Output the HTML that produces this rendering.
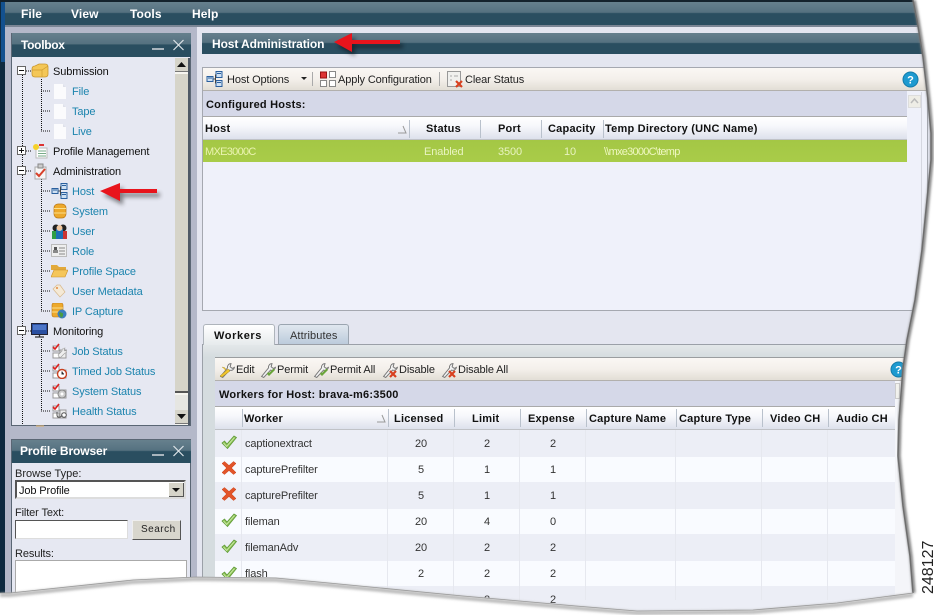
<!DOCTYPE html>
<html><head><meta charset="utf-8"><style>
html,body{margin:0;padding:0;background:#fff}
#p{position:relative;width:938px;height:616px;overflow:hidden;background:#b4b8c9;font-family:"Liberation Sans",sans-serif;font-size:11px;color:#222;filter:blur(.25px)}
#p div,#p span,#p svg{position:absolute}
.t{white-space:nowrap;line-height:14px;letter-spacing:-.12px;margin-top:1px}
.b{font-weight:bold;color:#111;letter-spacing:.22px}
.w{color:#fff;font-weight:bold;font-size:12px;letter-spacing:-.1px}
.m{letter-spacing:.1px}
.l{color:#1c84ae;left:72px}
.k{color:#111;left:53px}
.c{text-align:center;color:#333}
.bar{background:linear-gradient(#66808d 0,#557180 45%,#2a4e60 50%,#2a4e60 100%)}
.tb{background:linear-gradient(#faf7f4 0,#f3efea 50%,#e2ded6 95%,#8d8d8d 100%)}
.hd{background:linear-gradient(#fff 0,#f6f7fb 40%,#dde1ec 95%,#aaa 100%)}
.sep{width:1px;background:#b9c1cc}
.cl{width:1px;background:#e6e8ef;top:430px;height:170px}
</style></head><body><div id="p">
<svg width="0" height="0"><defs>
<symbol id="page" viewBox="0 0 16 16"><path d="M2 1h9l3 3v12H2z" fill="#fbfbfd"/><path d="M11 1l3 3h-3z" fill="#dfe1ea"/></symbol>
<symbol id="net" viewBox="0 0 16 16"><rect x="0.5" y="5.5" width="6" height="5" fill="#cfe0f2" stroke="#2a5f9e"/><rect x="9.5" y="0.5" width="6" height="6" fill="#cfe0f2" stroke="#2a5f9e"/><rect x="9.5" y="9.5" width="6" height="6" fill="#cfe0f2" stroke="#2a5f9e"/><path d="M1.500 7h4M10.500 2.500h4M10.500 11.500h4" stroke="#2a5f9e"/><path d="M7 8h2M9 3.500v9" stroke="#444" fill="none"/></symbol>
<symbol id="check" viewBox="0 0 16 14"><path d="M1 8l2.500-2 2.500 3L13 1l2.500 1.500L6.500 13.500z" fill="#8cc152" stroke="#5f9a3a" stroke-width=".8"/><path d="M2.500 8l3 3.500L13.500 2.500" stroke="#c6e6a2" fill="none"/></symbol>
<symbol id="x" viewBox="0 0 16 14"><path d="M1 2.500L3.500 .5 8 4.500 12.500 .5 15 2.500 10.500 7 15 11.500 12.500 13.500 8 9.500 3.500 13.500 1 11.500 5.500 7z" fill="#e2552a" stroke="#c9431b" stroke-width=".5"/></symbol>
<symbol id="wr" viewBox="0 0 16 16"><path d="M1.500 14.500l2 1L10 8.500c2 .8 4-.2 4.500-2.500l-2 1-2-1.500.8-3C9 2.500 7.700 4.500 8 6.500z" fill="#f2f2f2" stroke="#777" stroke-width=".9"/></symbol>
<symbol id="tick" viewBox="0 0 16 16"><rect x="2" y="3" width="6" height="5" fill="#fff" stroke="#999"/><rect x="2" y="10" width="6" height="5" fill="#fff" stroke="#999"/><rect x="9" y="7" width="6" height="8" fill="#eee" stroke="#999"/><path d="M2 4l2 2 4-5" stroke="#d22" stroke-width="1.600" fill="none"/></symbol>
<symbol id="db" viewBox="0 0 16 16"><rect x="2" y="1" width="12" height="14" rx="4" fill="#eda92c" stroke="#b87514" stroke-width=".7"/><path d="M2 5.500h12M2 10h12" stroke="#fbe08c"/></symbol>
</defs></svg>

<!-- frame -->
<div style="left:0;top:0;width:5px;height:616px;background:#0e2a40"></div>
<div style="left:1px;top:0;width:4px;height:62px;background:#13518f"></div>
<div class="bar" style="left:5px;top:2px;width:930px;height:23px"></div>
<div style="left:0;top:0;width:938px;height:2px;background:#14222c"></div>
<div style="left:5px;top:25px;width:930px;height:2px;background:#7b8695"></div>
<div style="left:197px;top:27px;width:741px;height:590px;background:#e4e6f0"></div>
<span class="t w m" style="left:21px;top:6px">File</span>
<span class="t w m" style="left:71px;top:6px">View</span>
<span class="t w m" style="left:130px;top:6px">Tools</span>
<span class="t w m" style="left:192px;top:6px">Help</span>

<!-- Toolbox -->
<div style="left:11px;top:33px;width:180px;height:393px;background:#e6e8f2;box-shadow:inset 0 0 0 1px #5a6674"></div>
<div class="bar" style="left:12px;top:33px;width:179px;height:24px"></div>
<span class="t w" style="left:21px;top:37px;letter-spacing:-.3px">Toolbox</span>
<div style="left:152px;top:48px;width:12px;height:2px;background:#a9b5bd"></div>
<svg style="left:172px;top:39px" width="13" height="12"><path d="M1.500 1L11.500 11M11.500 1L1.500 11" stroke="#dfe5e9" stroke-width="1.200"/></svg>
<!-- scrollbar -->
<div style="left:175px;top:58px;width:14px;height:367px;background:#f6f5f0"></div>
<div style="left:175px;top:74px;width:13px;height:319px;background:#d6d4c9;border-bottom:2px solid #555;box-sizing:border-box"></div>
<div style="left:175px;top:395px;width:14px;height:16px;background:#e6e6e2"></div>
<div style="left:188px;top:58px;width:2px;height:367px;background:#4f5965"></div>
<div style="left:175px;top:58px;width:13px;height:14px;background:#d6d4c9;border-bottom:1px solid #777;box-sizing:border-box"></div>
<svg style="left:177px;top:62px" width="10" height="6"><path d="M0 5h9L4.500 0z" fill="#111"/></svg>
<div style="left:175px;top:410px;width:13px;height:14px;background:#d6d4c9;border-bottom:1px solid #777;box-sizing:border-box"></div>
<svg style="left:177px;top:414px" width="10" height="6"><path d="M0 0h9L4.500 5z" fill="#111"/></svg>

<!-- tree lines -->
<svg style="left:12px;top:57px" width="62" height="368"><g stroke="#111" stroke-dasharray="1 1" fill="none">
<path d="M10.500 18V368"/>
<path d="M29.500 22V74M29.500 122V254M29.500 282V354"/>
<path d="M29 34h10M29 54h10M29 74h10M29 134h10M29 154h10M29 174h10M29 194h10M29 214h10M29 234h10M29 254h10M29 294h10M29 314h10M29 334h10M29 354h10"/>
<path d="M14 14h6M14 94h6M14 114h6M14 274h6"/>
</g></svg>
<svg style="left:17px;top:66px" width="10" height="270"><g fill="#fff" stroke="#666"><rect x=".5" y=".5" width="8" height="8"/><rect x=".5" y="80.500" width="8" height="8"/><rect x=".5" y="100.500" width="8" height="8"/><rect x=".5" y="260.500" width="8" height="8"/></g><path d="M2 4.500h5M2 84.500h5M4.500 82v5M2 104.500h5M2 264.500h5" stroke="#111"/></svg>

<!-- tree icons -->
<svg style="left:31px;top:63px" width="18" height="16"><path d="M1 6Q1 3 4 3L8 1h6q3 0 3 3v7q0 3-3 3H4q-3 0-3-3z" fill="#f4c757" stroke="#c9962c" stroke-width=".8"/><path d="M1 7h10l6-4M11 7v7" stroke="#cf9c30" fill="none" stroke-width=".7"/></svg>
<svg style="left:52px;top:83px" width="16" height="16"><use href="#page"/></svg>
<svg style="left:52px;top:103px" width="16" height="16"><use href="#page"/></svg>
<svg style="left:52px;top:123px" width="16" height="16"><use href="#page"/></svg>
<svg style="left:32px;top:143px" width="16" height="16"><rect x="4" y="5" width="11" height="10" fill="#fff" stroke="#bbb"/><path d="M6 8h8M6 10.500h8M6 13h8" stroke="#7a8" /><circle cx="4" cy="4" r="3" fill="#f5d12a"/><rect x="7" y="1" width="5" height="2" fill="#d33"/></svg>
<svg style="left:33px;top:163px" width="15" height="17"><path d="M2 4h11v12H2z" fill="#f6f6f6" stroke="#aaa"/><rect x="5" y="1" width="5" height="4" fill="#ccc" stroke="#888"/><path d="M3 10l3 3 6-7" stroke="#d8402a" stroke-width="2" fill="none"/></svg>
<svg style="left:51px;top:183px" width="17" height="16"><use href="#net"/></svg>
<svg style="left:52px;top:203px" width="16" height="16"><use href="#db"/></svg>
<svg style="left:51px;top:223px" width="17" height="16"><circle cx="5" cy="5" r="3.500" fill="#222"/><circle cx="12" cy="5" r="3.500" fill="#222"/><rect x="1" y="8" width="5" height="8" fill="#2f9e44"/><rect x="11" y="8" width="5" height="8" fill="#c33"/><rect x="5" y="6" width="7" height="10" fill="#1d6fb5"/><circle cx="8.500" cy="5" r="3" fill="#f1c9a2"/></svg>
<svg style="left:51px;top:244px" width="16" height="13"><rect x=".5" y=".5" width="15" height="12" fill="#eee" stroke="#bbb"/><rect x="3" y="3" width="3" height="3" fill="#555"/><rect x="2" y="6" width="5" height="3" fill="#888"/><path d="M8 4h6M8 7h6M8 10h6" stroke="#888"/></svg>
<svg style="left:51px;top:264px" width="17" height="14"><path d="M0 1h6l2 2h7v3H0z" fill="#e2a93a"/><path d="M0 13L3 6h14l-3 7z" fill="#f5c65a" stroke="#c9902a" stroke-width=".6"/></svg>
<svg style="left:52px;top:284px" width="14" height="14"><path d="M1 5L5 1h3l5 7-5 5z" fill="#f4e9d6" stroke="#d8b98c" stroke-width=".7"/><circle cx="5" cy="4" r="1" fill="#e58a3c"/></svg>
<svg style="left:51px;top:303px" width="16" height="16"><rect x="1" y="0" width="11" height="14" rx="2" fill="#eda92c" stroke="#b87514" stroke-width=".6"/><path d="M1 5h11M1 9h11" stroke="#fbe08c"/><circle cx="11" cy="11" r="4.500" fill="#3d7fbd"/><path d="M8 10c2-2 3 1 4 0v3l-2 2z" fill="#4a9c3f"/></svg>
<svg style="left:31px;top:323px" width="18" height="17"><rect x=".5" y=".5" width="16" height="11" fill="#2a4fa0" stroke="#223"/><rect x="2" y="2" width="13" height="5" fill="#4d76c8"/><path d="M4 14h9M8.500 12v2" stroke="#333" stroke-width="1.300"/></svg>
<svg style="left:51px;top:343px" width="16" height="16"><use href="#tick"/><path d="M9 15l5-5c1 0 2-1 2-3l-2 1-1-1 1-2c-2 0-3 1-3 3l-4 4z" fill="#eee" stroke="#999" stroke-width=".6"/></svg>
<svg style="left:51px;top:363px" width="16" height="16"><use href="#tick"/><circle cx="11" cy="11" r="4.500" fill="#fff" stroke="#c8401f" stroke-width="1.400"/><path d="M11 8.500V11h2" stroke="#333"/></svg>
<svg style="left:51px;top:383px" width="16" height="16"><use href="#tick"/><circle cx="11" cy="11" r="4" fill="#ccc" stroke="#888"/><circle cx="11" cy="11" r="1.500" fill="#fff"/></svg>
<svg style="left:51px;top:403px" width="16" height="16"><use href="#tick"/><circle cx="13" cy="12" r="2.300" fill="#fff" stroke="#555"/><path d="M6 9v3c0 3 4 3 5 0" stroke="#555" fill="none"/></svg>
<div style="left:36px;top:425px;width:8px;height:2px;background:#d7b27a;opacity:.6"></div>

<!-- tree text -->
<span class="t k" style="top:64px">Submission</span>
<span class="t l" style="top:84px">File</span>
<span class="t l" style="top:104px">Tape</span>
<span class="t l" style="top:124px">Live</span>
<span class="t k" style="top:144px">Profile Management</span>
<span class="t k" style="top:164px">Administration</span>
<span class="t l" style="top:184px">Host</span>
<span class="t l" style="top:204px">System</span>
<span class="t l" style="top:224px">User</span>
<span class="t l" style="top:244px">Role</span>
<span class="t l" style="top:264px">Profile Space</span>
<span class="t l" style="top:284px">User Metadata</span>
<span class="t l" style="top:304px">IP Capture</span>
<span class="t k" style="top:324px">Monitoring</span>
<span class="t l" style="top:344px">Job Status</span>
<span class="t l" style="top:364px">Timed Job Status</span>
<span class="t l" style="top:384px">System Status</span>
<span class="t l" style="top:404px">Health Status</span>

<!-- Profile browser -->
<div style="left:11px;top:439px;width:180px;height:170px;background:#e6e8f2;box-shadow:inset 0 0 0 1px #5a6674"></div>
<div class="bar" style="left:12px;top:440px;width:179px;height:23px"></div>
<span class="t w" style="left:20px;top:443px">Profile Browser</span>
<div style="left:152px;top:454px;width:12px;height:2px;background:#a9b5bd"></div>
<svg style="left:172px;top:445px" width="13" height="12"><path d="M1.500 1L11.500 11M11.500 1L1.500 11" stroke="#dfe5e9" stroke-width="1.200"/></svg>
<span class="t" style="left:15px;top:466px;color:#222;letter-spacing:0">Browse Type:</span>
<div style="left:15px;top:480px;width:171px;height:19px;background:#fff;box-sizing:border-box;border:2px solid;border-color:#555 #ddd #ddd #555"></div>
<span class="t" style="left:19px;top:483px;color:#111">Job Profile</span>
<div style="left:169px;top:483px;width:15px;height:14px;background:#d6d4c9;box-sizing:border-box;border-right:1px solid #555;border-bottom:1px solid #555"></div>
<svg style="left:172px;top:488px" width="9" height="5"><path d="M0 0h8L4 4z" fill="#111"/></svg>
<span class="t" style="left:15px;top:505px;color:#222">Filter Text:</span>
<div style="left:15px;top:520px;width:113px;height:19px;background:#fff;box-sizing:border-box;border:1px solid;border-color:#555 #ddd #ddd #555"></div>
<div style="left:132px;top:520px;width:49px;height:20px;background:#d8d6cd;box-sizing:border-box;border:1px solid;border-color:#eee #555 #555 #eee"></div>
<span class="t" style="left:141px;top:522px;color:#222;font-size:10px;letter-spacing:.5px">Search</span>
<span class="t" style="left:15px;top:546px;color:#222">Results:</span>
<div style="left:15px;top:560px;width:172px;height:40px;background:#fff;box-sizing:border-box;border:1px solid #aaa"></div>

<!-- Host Admin header -->
<div class="bar" style="left:202px;top:33px;width:736px;height:21px"></div>
<span class="t w" style="left:212px;top:36px">Host Administration</span>

<!-- top panel -->
<div style="left:202px;top:67px;width:726px;height:244px;background:#eff1fa;box-sizing:border-box;border:1px solid #a5a8b0"></div>
<div class="tb" style="left:203px;top:68px;width:723px;height:23px"></div>
<svg style="left:206px;top:71px" width="17" height="16"><use href="#net"/></svg>
<span class="t" style="left:227px;top:72px;color:#222">Host Options</span>
<svg style="left:301px;top:77px" width="7" height="4"><path d="M0 0h6L3 3z" fill="#222"/></svg>
<div class="sep" style="left:312px;top:72px;height:14px;background:#aaa"></div>
<svg style="left:320px;top:71px" width="16" height="16"><rect x=".5" y="1" width="6" height="6" fill="#d33" stroke="#911"/><rect x="9.500" y=".5" width="6" height="6" fill="#fff" stroke="#888"/><rect x=".5" y="9.500" width="6" height="6" fill="#fff" stroke="#888"/><rect x="9.500" y="9.500" width="6" height="6" fill="#fff" stroke="#888"/></svg>
<span class="t" style="left:338px;top:72px;color:#222">Apply Configuration</span>
<div class="sep" style="left:439px;top:72px;height:14px;background:#aaa"></div>
<svg style="left:447px;top:71px" width="17" height="17"><rect x=".5" y=".5" width="13" height="15" fill="#f0f0ee" stroke="#999"/><path d="M3 5h2M3 9h2M7 5h4" stroke="#aaa"/><path d="M9 10l6 6M15 10l-6 6" stroke="#d8401f" stroke-width="2.200"/></svg>
<span class="t" style="left:465px;top:72px;color:#222">Clear Status</span>
<svg style="left:902px;top:71px" width="17" height="17"><circle cx="8.500" cy="8.500" r="7.500" fill="#1d9ad0" stroke="#137aa8"/><text x="8.500" y="12.500" font-size="11" font-weight="bold" fill="#fff" text-anchor="middle" font-family="Liberation Sans">?</text></svg>
<div style="left:203px;top:91px;width:704px;height:26px;background:#d5d8e8;border-bottom:1px solid #aaa;box-sizing:border-box"></div>
<span class="t b" style="left:206px;top:97px">Configured Hosts:</span>
<div class="hd" style="left:203px;top:117px;width:704px;height:23px"></div>
<div class="sep" style="left:409px;top:120px;height:18px"></div>
<div class="sep" style="left:480px;top:120px;height:18px"></div>
<div class="sep" style="left:541px;top:120px;height:18px"></div>
<div class="sep" style="left:603px;top:120px;height:18px"></div>
<span class="t b" style="left:205px;top:121px">Host</span>
<svg style="left:397px;top:125px" width="10" height="9"><path d="M1 8h8L6 1" stroke="#999" fill="none"/></svg>
<span class="t b" style="left:426px;top:121px">Status</span>
<span class="t b" style="left:498px;top:121px">Port</span>
<span class="t b" style="left:548px;top:121px">Capacity</span>
<span class="t b" style="left:605px;top:121px">Temp Directory (UNC Name)</span>
<div style="left:203px;top:140px;width:704px;height:22px;background:linear-gradient(#a4c745,#a9cc49)"></div>
<span class="t" style="left:205px;top:144px;color:#eaf3b0;letter-spacing:-.7px">MXE3000C</span>
<span class="t" style="left:424px;top:144px;color:#e8f3c0">Enabled</span>
<span class="t" style="left:498px;top:144px;color:#e8f3c0">3500</span>
<span class="t" style="left:564px;top:144px;color:#e8f3c0">10</span>
<span class="t" style="left:604px;top:144px;color:#eef7c0;letter-spacing:-.75px">\\mxe3000C\temp</span>
<div style="left:908px;top:95px;width:13px;height:13px;background:#eeede6;box-sizing:border-box;border:1px solid #ddd"></div>
<svg style="left:910px;top:98px" width="9" height="6"><path d="M1 5L4.500 1 8 5" stroke="#bbb" stroke-width="1.500" fill="none"/></svg>
<div style="left:921px;top:92px;width:1px;height:218px;background:#d5d7e0"></div>

<!-- tabs -->
<div style="left:202px;top:344px;width:736px;height:1px;background:#9ba0a8"></div>
<!-- worker panel -->
<div style="left:202px;top:345px;width:736px;height:271px;background:linear-gradient(#e3e7e9,#d5dcdf 12px)"></div>
<div style="left:202px;top:345px;width:1px;height:240px;background:#9ba0a8"></div>
<div style="left:198px;top:345px;width:4px;height:240px;background:#e4e6f0"></div>
<div style="left:203px;top:324px;width:72px;height:21px;background:linear-gradient(#fff,#e6eaec);box-sizing:border-box;border:1px solid #aeb4bb;border-bottom:0;border-radius:3px 3px 0 0"></div>
<div style="left:278px;top:324px;width:71px;height:20px;background:linear-gradient(#e0e7ef,#bccbdb);box-sizing:border-box;border:1px solid #9ba5b0;border-bottom:0;border-radius:3px 3px 0 0"></div>
<span class="t b" style="left:214px;top:328px;letter-spacing:.6px">Workers</span>
<span class="t" style="left:290px;top:328px;color:#333;letter-spacing:.1px">Attributes</span>
<div style="left:215px;top:357px;width:723px;height:1px;background:#9a9d9f"></div>
<div class="tb" style="left:215px;top:358px;width:723px;height:23px"></div>
<div style="left:215px;top:381px;width:680px;height:26px;background:#d5d8e8;border-bottom:1px solid #aaa;box-sizing:border-box"></div>
<div style="left:215px;top:407px;width:680px;height:23px" class="hd"></div>
<div style="left:895px;top:381px;width:43px;height:235px;background:#f4f5f9"></div>

<!-- worker toolbar -->
<svg style="left:219px;top:361px" width="17" height="17"><use href="#wr"/><path d="M1 15l8-7 2 2-8 6zM3 6l3 1 1 3" fill="#f1c62c" stroke="#a8871a" stroke-width=".5"/></svg>
<span class="t" style="left:236px;top:362px">Edit</span>
<svg style="left:260px;top:361px" width="17" height="17"><use href="#wr"/><path d="M7 13l2 2 6-6-1.500-1.500L9 12l-1-1z" fill="#6aa53a"/></svg>
<span class="t" style="left:277px;top:362px">Permit</span>
<svg style="left:313px;top:361px" width="17" height="17"><use href="#wr"/><path d="M7 13l2 2 6-6-1.500-1.500L9 12l-1-1z" fill="#6aa53a"/></svg>
<span class="t" style="left:330px;top:362px">Permit All</span>
<svg style="left:382px;top:361px" width="17" height="17"><use href="#wr"/><path d="M8 10l6 6M14 10l-6 6" stroke="#d8401f" stroke-width="2.200"/></svg>
<span class="t" style="left:399px;top:362px">Disable</span>
<svg style="left:441px;top:361px" width="17" height="17"><use href="#wr"/><path d="M8 10l6 6M14 10l-6 6" stroke="#d8401f" stroke-width="2.200"/></svg>
<span class="t" style="left:458px;top:362px">Disable All</span>
<svg style="left:890px;top:361px" width="17" height="17"><circle cx="8.500" cy="8.500" r="7.500" fill="#1d9ad0" stroke="#137aa8"/><text x="8.500" y="12.500" font-size="11" font-weight="bold" fill="#fff" text-anchor="middle" font-family="Liberation Sans">?</text></svg>
<span class="t b" style="left:219px;top:387px">Workers for Host: brava-m6:3500</span>
<div style="left:895px;top:383px;width:5px;height:16px;background:#f2f2ee;box-sizing:border-box;border:1px solid #ccc"></div>

<!-- worker header -->
<div class="sep" style="left:242px;top:409px;height:18px"></div>
<div class="sep" style="left:388px;top:409px;height:18px"></div>
<div class="sep" style="left:454px;top:409px;height:18px"></div>
<div class="sep" style="left:520px;top:409px;height:18px"></div>
<div class="sep" style="left:586px;top:409px;height:18px"></div>
<div class="sep" style="left:676px;top:409px;height:18px"></div>
<div class="sep" style="left:762px;top:409px;height:18px"></div>
<div class="sep" style="left:828px;top:409px;height:18px"></div>
<span class="t b" style="left:244px;top:411px">Worker</span>
<svg style="left:376px;top:414px" width="10" height="9"><path d="M1 8h8L6 1" stroke="#999" fill="none"/></svg>
<span class="t b" style="left:394px;top:411px">Licensed</span>
<span class="t b" style="left:472px;top:411px">Limit</span>
<span class="t b" style="left:528px;top:411px">Expense</span>
<span class="t b" style="left:589px;top:411px">Capture Name</span>
<span class="t b" style="left:679px;top:411px">Capture Type</span>
<span class="t b" style="left:770px;top:411px">Video CH</span>
<span class="t b" style="left:836px;top:411px">Audio CH</span>

<!-- rows -->
<div style="left:215px;top:430px;width:680px;height:27px;background:#eceef6"></div>
<div style="left:215px;top:457px;width:680px;height:25px;background:#f9fbff"></div>
<div style="left:215px;top:482px;width:680px;height:27px;background:#eceef6"></div>
<div style="left:215px;top:509px;width:680px;height:25px;background:#f9fbff"></div>
<div style="left:215px;top:534px;width:680px;height:27px;background:#eceef6"></div>
<div style="left:215px;top:561px;width:680px;height:25px;background:#f9fbff"></div>
<div style="left:215px;top:586px;width:680px;height:30px;background:#eceef6"></div>
<div class="cl" style="left:241px"></div><div class="cl" style="left:387px"></div><div class="cl" style="left:453px"></div><div class="cl" style="left:519px"></div><div class="cl" style="left:585px"></div><div class="cl" style="left:675px"></div><div class="cl" style="left:761px"></div><div class="cl" style="left:827px"></div>

<svg style="left:221px;top:435px" width="16" height="14"><use href="#check"/></svg>
<svg style="left:221px;top:461px" width="16" height="14"><use href="#x"/></svg>
<svg style="left:221px;top:487px" width="16" height="14"><use href="#x"/></svg>
<svg style="left:221px;top:513px" width="16" height="14"><use href="#check"/></svg>
<svg style="left:221px;top:539px" width="16" height="14"><use href="#check"/></svg>
<svg style="left:221px;top:566px" width="16" height="14"><use href="#check"/></svg>

<span class="t" style="left:245px;top:436px;color:#333">captionextract</span>
<span class="t" style="left:245px;top:462px;color:#333">capturePrefilter</span>
<span class="t" style="left:245px;top:488px;color:#333">capturePrefilter</span>
<span class="t" style="left:245px;top:514px;color:#333">fileman</span>
<span class="t" style="left:245px;top:540px;color:#333">filemanAdv</span>
<span class="t" style="left:245px;top:566px;color:#333">flash</span>

<span class="t c" style="left:388px;width:66px;top:436px">20</span><span class="t c" style="left:454px;width:66px;top:436px">2</span><span class="t c" style="left:520px;width:66px;top:436px">2</span>
<span class="t c" style="left:388px;width:66px;top:462px">5</span><span class="t c" style="left:454px;width:66px;top:462px">1</span><span class="t c" style="left:520px;width:66px;top:462px">1</span>
<span class="t c" style="left:388px;width:66px;top:488px">5</span><span class="t c" style="left:454px;width:66px;top:488px">1</span><span class="t c" style="left:520px;width:66px;top:488px">1</span>
<span class="t c" style="left:388px;width:66px;top:514px">20</span><span class="t c" style="left:454px;width:66px;top:514px">4</span><span class="t c" style="left:520px;width:66px;top:514px">0</span>
<span class="t c" style="left:388px;width:66px;top:540px">20</span><span class="t c" style="left:454px;width:66px;top:540px">2</span><span class="t c" style="left:520px;width:66px;top:540px">2</span>
<span class="t c" style="left:388px;width:66px;top:566px">2</span><span class="t c" style="left:454px;width:66px;top:566px">2</span><span class="t c" style="left:520px;width:66px;top:566px">2</span>
<span class="t c" style="left:454px;width:66px;top:592px">2</span><span class="t c" style="left:520px;width:66px;top:592px">2</span>

<!-- torn edge -->
<svg style="left:0;top:0" width="938" height="616" viewBox="0 0 938 616">
<defs><filter id="bl" x="-5%" y="-5%" width="110%" height="110%"><feGaussianBlur stdDeviation="1.200"/></filter></defs>
<path d="M938 0H913L917 20 923 57 928 100 931 133 931 160 928 190 922 250 915 300 907 340 903 368 899 420 898 456 903 506 910 556 913 593 837 603 753 610 637 611 576 606 463 596 329 583 276 578 196 577 133 580 10 593 0 593V616H938Z" fill="#fff"/>
<path d="M914 0L918 20 924 57 929 100 932 133 932 160 929 190 923 250 916 300 908 340 904 368 900 420 899 456 904 506 911 556 914 593" fill="none" stroke="#777" stroke-width="3" filter="url(#bl)"/>
<path d="M913 0L917 20 923 57 928 100 931 133 931 160 928 190 922 250 915 300 907 340 903 368 899 420 898 456 903 506 910 556 913 593" fill="none" stroke="#6e6e6e" stroke-width="1.500"/>
<path d="M913 593 837 603 753 610 637 611 576 606 463 596 329 583 276 578 196 577 133 580 10 593 0 593" fill="none" stroke="#bbb" stroke-width="4" filter="url(#bl)" transform="translate(0,2)"/>
<path d="M913 593 837 603 753 610 637 611 576 606 463 596 329 583 276 578 196 577 133 580 10 593 0 593" fill="none" stroke="#999" stroke-width=".8"/>
</svg>

<!-- arrows -->
<svg style="left:325px;top:25px;filter:drop-shadow(3px 4px 2px rgba(0,0,0,.45))" width="90" height="40"><path d="M9 17L27 8 27 15 75 15 75 19 27 19 27 27z" fill="#e8141c"/></svg>
<svg style="left:92px;top:175px;filter:drop-shadow(3px 4px 2px rgba(0,0,0,.45))" width="80" height="40"><path d="M8 16L28 8 28 14 65 14 65 18 28 18 28 26z" fill="#e8141c"/></svg>

<span class="t" style="left:922px;top:594px;width:0;height:0;margin:0;color:#222;font-size:16px;line-height:14px;transform:rotate(-90deg);transform-origin:0 0;letter-spacing:0">248127</span>
</div></body></html>
